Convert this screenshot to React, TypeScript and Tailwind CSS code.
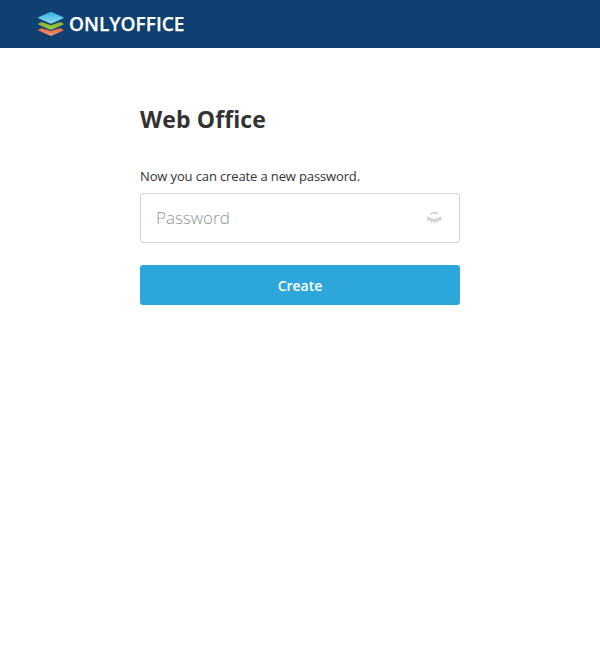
function Logo() {
  return (
    <svg width="150" height="26" viewBox="0 0 150 26" role="img" aria-label="ONLYOFFICE" className="block overflow-visible">
      <defs>
        <linearGradient id="top" x1="0" y1="0" x2="0" y2="1">
          <stop offset="0" stopColor="#2fb1dc" />
          <stop offset="1" stopColor="#8fd8f5" />
        </linearGradient>
        <linearGradient id="mid" x1="0" y1="0" x2="0" y2="1">
          <stop offset="0" stopColor="#8cb020" />
          <stop offset="1" stopColor="#a3c852" />
        </linearGradient>
        <linearGradient id="low" x1="0" y1="0" x2="0" y2="1">
          <stop offset="0" stopColor="#e8623b" />
          <stop offset="1" stopColor="#f09a7b" />
        </linearGradient>
      </defs>
      <g transform="translate(.8 .7) scale(.97)">
        <path d="M0.6 18.5 4 16.7l9.5 3.2 9.5-3.2 3.4 1.8q.7.5 0 1l-11.6 5.1q-1.3.5-2.6 0L.6 19.5q-.7-.5 0-1Z" fill="url(#low)" />
        <path d="M0.6 12.2 4 10.5l9.5 3.4 9.5-3.4 3.4 1.7q.7.5 0 1l-11.6 5.1q-1.3.5-2.6 0L.6 13.2q-.7-.5 0-1Z" fill="url(#mid)" />
        <path d="M.6 5.7 12.2.6q1.3-.5 2.6 0l11.6 5.1q.7.5 0 1l-11.6 5.2q-1.3.5-2.6 0L.6 6.7q-.7-.5 0-1Z" fill="url(#top)" />
      </g>
      <text x="32" y="20.2" textLength="115.5" lengthAdjust="spacingAndGlyphs" fill="#fff" stroke="#fff" strokeWidth=".25" className="font-['Open_Sans',sans-serif] text-[20.5px] font-semibold">ONLYOFFICE</text>
    </svg>
  );
}

function ClosedEye() {
  return (
    <svg width="16" height="14" viewBox="0 0 16 14" fill="none" stroke="#d0d5da" className="block">
      <path d="M4.5 3Q8.3.8 12 3" strokeWidth="1.8" />
      <path d="M1.3 6.5Q8.3 12 15.3 6.5" strokeWidth="2.8" />
      <path d="M2.2 7.5v2.3M5.3 9v2.7M8.3 9.5v2.7M11.3 9v2.7M14.4 7.5v2.3" strokeWidth="1.6" />
    </svg>
  );
}

export default function App() {
  return (
    <div className="flex h-[667px] flex-col bg-white font-['Open_Sans',sans-serif] text-[#333]">
      <header className="h-12 bg-[#0f4071] pt-[11px] pl-[37px]">
        <Logo />
      </header>
      <main className="mx-auto w-80 pt-[55px]">
        <h1 className="text-[23px] leading-8 font-bold tracking-[0.1px]">Web Office</h1>
        <form className="pt-8" onSubmit={(e) => e.preventDefault()}>
          <label htmlFor="password" className="block text-[13px] leading-[18px] tracking-[-0.13px]">Now you can create a new password.</label>
          <div className="mt-2 flex h-[50px] items-center rounded-[3px] border border-[#d0d5da] pr-[17px] pl-[15px]">
            <input id="password" type="password" placeholder="Password" className="h-6 min-w-0 flex-1 text-[17px] leading-6 font-light outline-none placeholder:text-[#8f969c]" />
            <ClosedEye />
          </div>
          <button className="mt-[22px] block h-10 w-full rounded-[3px] bg-[#2da7db] pt-px text-sm font-semibold text-white">Create</button>
        </form>
      </main>
    </div>
  );
}
